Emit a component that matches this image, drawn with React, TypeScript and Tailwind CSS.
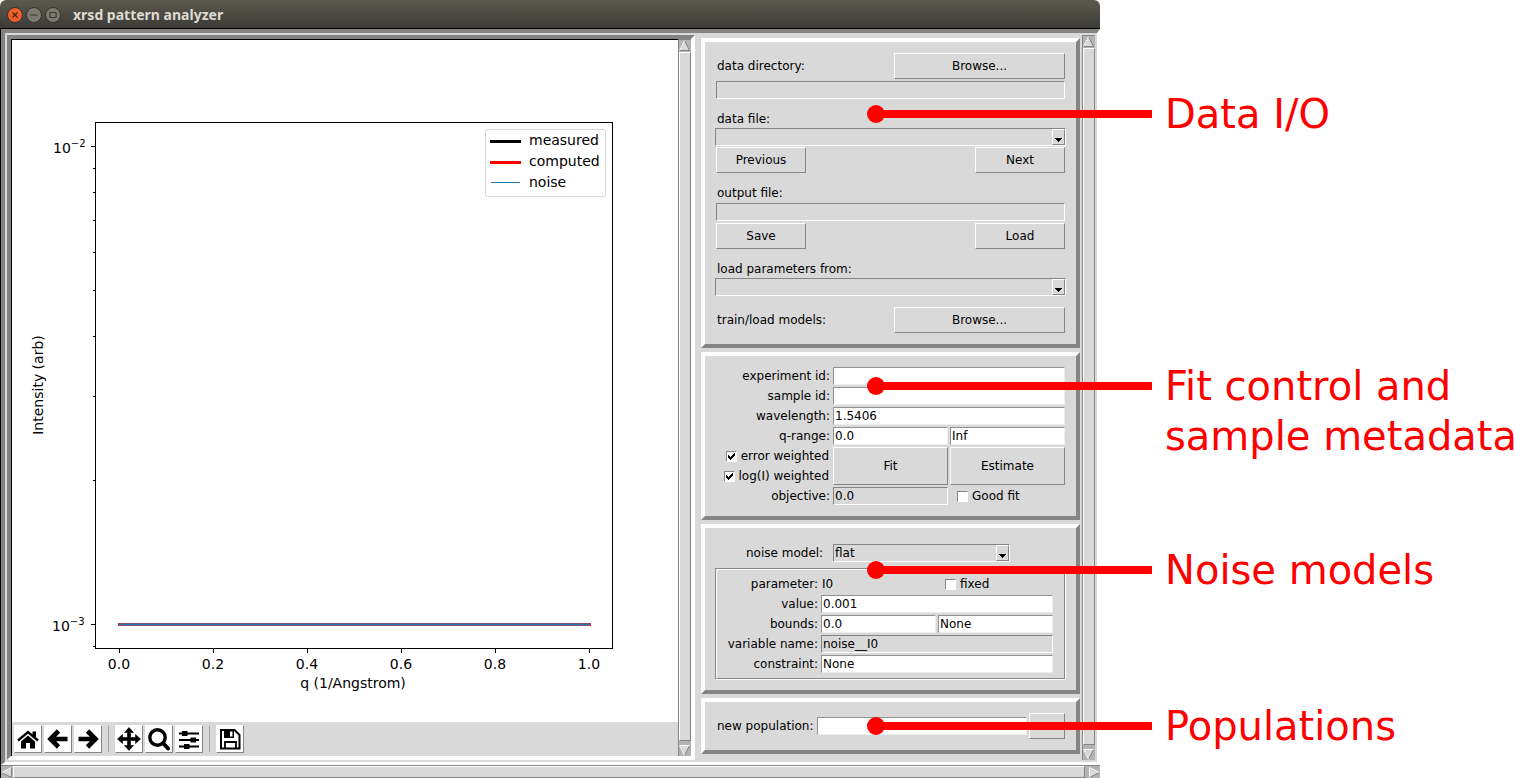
import { useState, type ReactNode } from "react";

const sunken = "border border-t-[#858585] border-l-[#858585] border-b-white border-r-white";
const raised = "border border-t-white border-l-white border-b-[#858585] border-r-[#858585]";

function TkButton({ children, className = "" }: { children?: ReactNode; className?: string }) {
    return (
        <button type="button" className={`flex h-[26px] items-center justify-center bg-[#d9d9d9] ${raised} ${className}`}>
            {children}
        </button>
    );
}

interface EntryProps {
    id?: string;
    label?: string;
    value?: string;
    readOnly?: boolean;
    className?: string;
}

function Entry({ id, label, value = "", readOnly = false, className = "" }: EntryProps) {
    const [text, setText] = useState(value);
    const look = readOnly
        ? `bg-[#d9d9d9] ${sunken}`
        : "bg-white border border-t-[#929292] border-l-[#929292] border-b-[#ededed] border-r-[#ededed]";
    return (
        <input
            id={id}
            type="text"
            aria-label={label}
            value={text}
            readOnly={readOnly}
            onChange={(e) => setText(e.target.value)}
            className={`h-[18px] min-w-0 px-px outline-none ${look} ${className}`}
        />
    );
}

function Combo({ id, options, className = "" }: { id: string; options: string[]; className?: string }) {
    return (
        <div className={`relative h-[18px] ${sunken} ${className}`}>
            <select id={id} className="block h-4 w-full appearance-none bg-[#d9d9d9] px-px leading-4 outline-none">
                {options.map((opt) => (
                    <option key={opt}>{opt}</option>
                ))}
            </select>
            <span className={`pointer-events-none absolute top-0 right-0 flex h-4 w-[13px] items-end justify-center bg-[#d9d9d9] pb-[2px] ${raised}`}>
                <svg width="7" height="4" viewBox="0 0 7 4" shapeRendering="crispEdges">
                    <path d="M0 0h7v1h-1v1h-1v1h-1v1h-1v-1h-1v-1h-1v-1h-1z" />
                </svg>
            </span>
        </div>
    );
}

function Check({ label, checked = false, className = "" }: { label: string; checked?: boolean; className?: string }) {
    const [on, setOn] = useState(checked);
    return (
        <label className={`flex items-center gap-1 ${className}`}>
            <span className="relative block size-[11px]">
                <input
                    type="checkbox"
                    checked={on}
                    onChange={() => setOn(!on)}
                    className={`block size-[11px] appearance-none bg-white ${sunken}`}
                />
                {on && (
                    <svg className="pointer-events-none absolute top-[2px] left-[2px]" width="7" height="7" viewBox="0 0 7 7" shapeRendering="crispEdges">
                        <path d="M0 2h1v1h1v1h1v-1h1v-1h1v-1h1v-1h1v3h-1v1h-1v1h-1v1h-1v1h-1v-1h-1v-1h-1z" />
                    </svg>
                )}
            </span>
            {label}
        </label>
    );
}

// drawn pointing up, then turned; the lit edges depend on the direction
const arrows = {
    up: { turn: "", lit: "M0.5 10.5L5.5 0.5" },
    right: { turn: "rotate-90", lit: "M5.5 0.5L0.5 10.5H10.5" },
    down: { turn: "rotate-180", lit: "M0.5 10.5H10.5L5.5 0.5" },
    left: { turn: "-rotate-90", lit: "M5.5 0.5L10.5 10.5" },
};

function Arrow({ dir }: { dir: keyof typeof arrows }) {
    return (
        <svg className={`shrink-0 ${arrows[dir].turn}`} width="11" height="11" viewBox="0 0 11 11">
            <path d="M0.5 10.5L5.5 0.5L10.5 10.5Z" fill="#d9d9d9" stroke="#858585" />
            <path d={arrows[dir].lit} fill="none" stroke="#fff" />
        </svg>
    );
}

function VScroll() {
    return (
        <div className="flex w-[13px] shrink-0 flex-col items-stretch gap-px border-t border-l border-t-[#858585] border-l-[#858585] bg-[#b3b3b3]">
            <Arrow dir="up" />
            <div className={`flex-1 bg-[#d9d9d9] ${raised}`} />
            <div className="h-[2px]" />
            <Arrow dir="down" />
        </div>
    );
}

function Panel({ children, className = "" }: { children: ReactNode; className?: string }) {
    return (
        <section className={`border-4 border-t-white border-l-white border-r-[#858585] border-b-[#858585] ${className}`}>
            {children}
        </section>
    );
}

const yMinor = [168, 192, 220, 252, 290, 336, 396, 480, 646];
const xTicks = [
    { x: 119, label: "0.0" },
    { x: 213, label: "0.2" },
    { x: 307, label: "0.4" },
    { x: 401, label: "0.6" },
    { x: 495, label: "0.8" },
    { x: 589, label: "1.0" },
];

function Plot() {
    return (
        <svg className="block h-[682px] w-[666px] max-w-none" viewBox="12 40 666 682" fontFamily="'DejaVu Sans', sans-serif" fontSize="14">
            <g stroke="#000" fill="none" shapeRendering="crispEdges">
                <rect x="95.5" y="122.5" width="517" height="526" />
                <path d="M91 146.5H95M91 624.5H95" />
                {yMinor.map((y) => (
                    <path key={y} d={`M93 ${y + 0.5}H95`} />
                ))}
                {xTicks.map((t) => (
                    <path key={t.x} d={`M${t.x + 0.5} 649V653`} />
                ))}
            </g>
            <path d="M118 624.5H591" stroke="#e8262c" strokeWidth="3" />
            <path d="M119 624.5H590" stroke="#1f77b4" strokeWidth="2" />
            {xTicks.map((t) => (
                <text key={t.x} x={t.x} y="669" textAnchor="middle">{t.label}</text>
            ))}
            <text x="53" y="153">10<tspan dy="-6" fontSize="10">−2</tspan></text>
            <text x="52" y="631">10<tspan dy="-6" fontSize="10">−3</tspan></text>
            <text x="353" y="688" textAnchor="middle">q (1/Angstrom)</text>
            <text transform="translate(43 385) rotate(-90)" textAnchor="middle">Intensity (arb)</text>
            <rect x="485.5" y="129.5" width="120" height="67" rx="2" fill="#fff" stroke="#d6d6d6" />
            <path d="M490 141.5H521" stroke="#000" strokeWidth="3" />
            <path d="M490 162.5H521" stroke="#f00" strokeWidth="3" />
            <path d="M491 182.5H520" stroke="#1f77b4" />
            <text x="529" y="145">measured</text>
            <text x="529" y="166">computed</text>
            <text x="529" y="187">noise</text>
        </svg>
    );
}

const tools: { name: string; art: ReactNode }[] = [
    {
        name: "Home",
        art: (
            <>
                <path d="M2 13.500L12 5L22 13.500" fill="none" stroke="#000" strokeWidth="2.400" />
                <path d="M16.500 4.500h3.500v7l-3.500-3zM5 14.500L12 8.500L19 14.500V21.500H14V16H10V21.500H5z" />
            </>
        ),
    },
    { name: "Back", art: <path d="M12.500 4L4.500 12L12.500 20M5 12H21.500" fill="none" stroke="#000" strokeWidth="4.600" /> },
    { name: "Forward", art: <path d="M11.500 4L19.500 12L11.500 20M19 12H2.500" fill="none" stroke="#000" strokeWidth="4.600" /> },
    {
        name: "Pan",
        art: <path d="M12 .5L16.500 5.500H13.500V10.500H18.500V7.500L23.500 12L18.500 16.500V13.500H13.500V18.500H16.500L12 23.500L7.500 18.500H10.500V13.500H5.500V16.500L.5 12L5.500 7.500V10.500H10.500V5.500H7.500z" stroke="#000" strokeWidth=".6" />,
    },
    {
        name: "Zoom",
        art: (
            <g fill="none" stroke="#000">
                <circle cx="10.500" cy="10.500" r="7.700" strokeWidth="3.400" />
                <path d="M16 16L21 21.500" strokeWidth="4" strokeLinecap="round" />
            </g>
        ),
    },
    {
        name: "Configure subplots",
        art: (
            <>
                <path d="M2 6.500H22M2 13H22M2 19.500H22" stroke="#000" strokeWidth="2" />
                <path d="M5 4h5.500v5H5zM13.500 10.500H19v5h-5.500zM7 17h5.500v5H7z" />
            </>
        ),
    },
    {
        name: "Save figure",
        art: (
            <>
                <path d="M3 3H16.500L21.500 8V21.500H3z" fill="none" stroke="#000" strokeWidth="2" />
                <path d="M6 3h10v8h-10z" />
                <path d="M12 4.500h2.500v5H12z" fill="#fff" />
                <path d="M7 21V15H18V21" fill="none" stroke="#000" strokeWidth="1.800" />
            </>
        ),
    },
];

function Toolbar() {
    return (
        <div className="flex h-[34px] items-center bg-[#d9d9d9] pl-[2px]">
            {tools.map((tool, i) => (
                <div key={tool.name} className="flex items-center">
                    {(i === 3 || i === 6) && <div className="mr-[6px] ml-1 h-[26px] w-px bg-[#a3a3a3]" />}
                    <button type="button" aria-label={tool.name} className={`mr-[2px] flex size-7 items-center justify-center bg-white ${raised}`}>
                        <svg width="24" height="24" viewBox="0 0 24 24">{tool.art}</svg>
                    </button>
                </div>
            ))}
        </div>
    );
}

function DataPanel() {
    return (
        <Panel className="flex flex-col px-[11px] pt-[11px] pb-[11px]">
            <div className="flex items-center justify-between pl-px">
                <label htmlFor="data-dir">data directory:</label>
                <TkButton className="w-[171px]">Browse...</TkButton>
            </div>
            <Entry id="data-dir" readOnly className="mt-[2px]" />
            <label htmlFor="data-file" className="mt-[13px] mb-px pl-px leading-[15px]">data file:</label>
            <Combo id="data-file" options={[""]} className="-mx-px" />
            <div className="mt-px flex justify-between">
                <TkButton className="w-[90px]">Previous</TkButton>
                <TkButton className="w-[90px]">Next</TkButton>
            </div>
            <label htmlFor="output-file" className="mt-[13px] mb-[2px] pl-px leading-[15px]">output file:</label>
            <Entry id="output-file" readOnly />
            <div className="mt-[2px] flex justify-between">
                <TkButton className="w-[90px]">Save</TkButton>
                <TkButton className="w-[90px]">Load</TkButton>
            </div>
            <label htmlFor="params" className="mt-[13px] mb-px pl-px leading-[15px]">load parameters from:</label>
            <Combo id="params" options={[""]} className="-mx-px" />
            <div className="mt-[11px] flex items-center justify-between pl-px">
                <span>train/load models:</span>
                <TkButton className="w-[171px]">Browse...</TkButton>
            </div>
        </Panel>
    );
}

function FitPanel() {
    return (
        <Panel className="grid grid-cols-[115px_1fr_1fr] gap-x-[2px] gap-y-[2px] px-[11px] pt-[11px] pb-[11px]">
            <label htmlFor="experiment" className="pr-px text-right">experiment id:</label>
            <Entry id="experiment" className="col-span-2" />
            <label htmlFor="sample" className="pr-px text-right">sample id:</label>
            <Entry id="sample" className="col-span-2" />
            <label htmlFor="wavelength" className="pr-px text-right">wavelength:</label>
            <Entry id="wavelength" value="1.5406" className="col-span-2" />
            <label htmlFor="q-min" className="pr-px text-right">q-range:</label>
            <Entry id="q-min" value="0.0" />
            <Entry label="q-range maximum" value="Inf" />
            <Check label="error weighted" checked className="justify-end pr-[2px]" />
            <TkButton className="row-span-2 h-[38px]">Fit</TkButton>
            <TkButton className="row-span-2 h-[38px]">Estimate</TkButton>
            <Check label="log(I) weighted" checked className="justify-end pr-[2px]" />
            <label htmlFor="objective" className="pr-px text-right">objective:</label>
            <Entry id="objective" value="0.0" readOnly />
            <Check label="Good fit" className="pl-[7px]" />
        </Panel>
    );
}

function NoisePanel() {
    return (
        <Panel className="px-[10px] pt-4 pb-[10px]">
            <div className="flex justify-between pr-14 pl-[31px]">
                <label htmlFor="noise-model">noise model:</label>
                <Combo id="noise-model" options={["flat"]} className="w-[177px]" />
            </div>
            <div className={`mt-[6px] ${sunken}`}>
                <div className="grid grid-cols-[101px_1fr_1fr] gap-x-[2px] gap-y-[2px] border border-t-white border-r-[#858585] border-b-[#858585] border-l-white py-[5px] pr-[11px] pl-px">
                    <span className="pr-px text-right">parameter:</span>
                    <span className="pl-px">I0</span>
                    <Check label="fixed" className="pl-[7px]" />
                    <label htmlFor="value" className="pr-px text-right">value:</label>
                    <Entry id="value" value="0.001" className="col-span-2" />
                    <label htmlFor="bounds" className="pr-px text-right">bounds:</label>
                    <Entry id="bounds" value="0.0" />
                    <Entry label="upper bound" value="None" />
                    <label htmlFor="variable" className="pr-px text-right">variable name:</label>
                    <Entry id="variable" value="noise__I0" readOnly className="col-span-2" />
                    <label htmlFor="constraint" className="pr-px text-right">constraint:</label>
                    <Entry id="constraint" value="None" className="col-span-2" />
                </div>
            </div>
        </Panel>
    );
}

function PopulationPanel() {
    return (
        <Panel className="flex items-center gap-[2px] px-[11px] py-[11px]">
            <label htmlFor="population" className="w-[99px] pl-px whitespace-nowrap">new population:</label>
            <Entry id="population" className="flex-1" />
            <TkButton className="w-9">+</TkButton>
        </Panel>
    );
}

function TitleBar() {
    return (
        <header className="flex h-[29px] items-center gap-[3px] rounded-t-md border-b border-black bg-linear-to-b from-[#5c594f] to-[#3c3b37] pt-px pl-[7px]">
            <button type="button" aria-label="Close" className="size-4 rounded-full border border-[#35332e] bg-[#ee5f2c]">
                <svg viewBox="0 0 14 14" className="block size-full"><path d="M4.500 4.500L9.500 9.500M9.500 4.500L4.500 9.500" stroke="#4a2417" strokeWidth="1.400" /></svg>
            </button>
            <button type="button" aria-label="Minimize" className="size-4 rounded-full border border-[#35332e] bg-[#7d7a72]">
                <svg viewBox="0 0 14 14" className="block size-full"><path d="M3.500 7H10.500" stroke="#3c3b37" strokeWidth="1.200" /></svg>
            </button>
            <button type="button" aria-label="Maximize" className="size-4 rounded-full border border-[#35332e] bg-[#7d7a72]">
                <svg viewBox="0 0 14 14" className="block size-full"><path d="M4 4.500H10V9.500H4z" fill="none" stroke="#3c3b37" strokeWidth="1.200" /></svg>
            </button>
            <h1 className="ml-[9px] font-['Noto_Sans','Open_Sans',sans-serif] text-sm font-bold text-[#dfdbd2]">xrsd pattern analyzer</h1>
        </header>
    );
}

const callouts = [
    { y: 114, lines: ["Data I/O"] },
    { y: 386, lines: ["Fit control and", "sample metadata"] },
    { y: 570, lines: ["Noise models"] },
    { y: 726, lines: ["Populations"] },
];

function Callouts() {
    return (
        <svg className="pointer-events-none absolute top-0 right-0 h-[778px] w-[655px] overflow-hidden" viewBox="860 0 655 778" fontFamily="'DejaVu Sans', sans-serif" fontSize="40" fill="#f00">
            {callouts.map((c) => (
                <g key={c.y}>
                    <circle cx="876" cy={c.y} r="9" />
                    <path d={`M876 ${c.y}H1152`} stroke="#f00" strokeWidth="8" />
                    {c.lines.map((line, i) => (
                        <text key={line} x="1165" y={c.y + 14 + i * 50}>{line}</text>
                    ))}
                </g>
            ))}
        </svg>
    );
}

export default function App() {
    return (
        <main className="relative bg-white pr-[415px] font-['DejaVu_Sans',sans-serif] text-xs leading-[18px] text-black">
            <TitleBar />
            <div className="border-l border-black bg-[#d9d9d9]">
                <div className="flex border-t-4 border-r-[3px] border-b-[3px] border-l-4 border-t-[#858282] border-r-white border-b-white border-l-[#858282]">
                    <div className="my-[2px] ml-[2px] flex min-w-0 flex-1 border-4 border-t-[#858282] border-r-white border-b-white border-l-[#858282]">
                        <div className="min-w-0 flex-1 overflow-hidden border-t border-l border-black bg-white">
                            <Plot />
                            <Toolbar />
                        </div>
                        <VScroll />
                    </div>
                    <div className="mt-[5px] ml-[6px] flex w-[379px] shrink-0 flex-col gap-1">
                        <DataPanel />
                        <FitPanel />
                        <NoisePanel />
                        <PopulationPanel />
                    </div>
                    <div className="m-[2px] flex">
                        <VScroll />
                    </div>
                </div>
                <div className="flex h-[13px] items-center gap-px border-t border-[#858585] bg-[#b3b3b3]">
                    <Arrow dir="left" />
                    <div className={`h-3 flex-1 bg-[#d9d9d9] ${raised}`} />
                    <div className="w-[2px]" />
                    <Arrow dir="right" />
                </div>
            </div>
            <Callouts />
        </main>
    );
}
